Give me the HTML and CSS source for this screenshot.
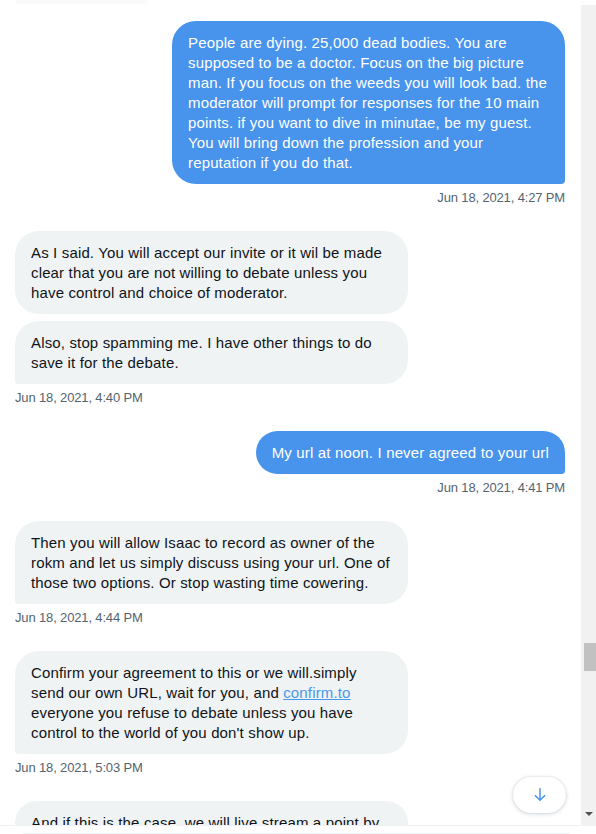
FILE: index.html
```html
<!DOCTYPE html>
<html lang="en">
<head>
<meta charset="utf-8">
<title>Messages</title>
<link rel="stylesheet" href="styles.css">
</head>
<body>
<div class="app">
  <div class="viewport">
    <div class="thread">
      <div class="ghost"></div>

      <div class="group sent">
        <div class="bubble blue last wide">People are dying. 25,000 dead bodies. You are<br>supposed to be a doctor. Focus on the big picture<br>man. If you focus on the weeds you will look bad. the<br>moderator will prompt for responses for the 10 main<br>points. if you want to dive in minutae, be my guest.<br>You will bring down the profession and your<br>reputation if you do that.</div>
        <div class="time">Jun 18, 2021, 4:27 PM</div>
      </div>

      <div class="group received">
        <div class="bubble gray wide">As I said. You will accept our invite or it wil be made<br>clear that you are not willing to debate unless you<br>have control and choice of moderator.</div>
        <div class="bubble gray last wide">Also, stop spamming me. I have other things to do<br>save it for the debate.</div>
        <div class="time">Jun 18, 2021, 4:40 PM</div>
      </div>

      <div class="group sent">
        <div class="bubble blue last">My url at noon. I never agreed to your url</div>
        <div class="time">Jun 18, 2021, 4:41 PM</div>
      </div>

      <div class="group received">
        <div class="bubble gray last wide">Then you will allow Isaac to record as owner of the<br>rokm and let us simply discuss using your url. One of<br>those two options. Or stop wasting time cowering.</div>
        <div class="time">Jun 18, 2021, 4:44 PM</div>
      </div>

      <div class="group received">
        <div class="bubble gray last wide">Confirm your agreement to this or we will.simply<br>send our own URL, wait for you, and <a class="link" href="#">confirm.to</a><br>everyone you refuse to debate unless you have<br>control to the world of you don't show up.</div>
        <div class="time">Jun 18, 2021, 5:03 PM</div>
      </div>

      <div class="group received">
        <div class="bubble gray wide">And if this is the case, we will live stream a point by</div>
      </div>
    </div>

    <div class="scrollbar">
      <div class="thumb"></div>
      <div class="arrow-down"></div>
    </div>

    <button class="jump" type="button" aria-label="Scroll to bottom">
      <svg viewBox="0 0 24 24" width="18" height="18" aria-hidden="true"><path d="M13 3v13.59l5.043-5.05 1.414 1.42L12 20.41l-7.457-7.45 1.414-1.42L11 16.59V3h2z"/></svg>
    </button>
  </div>
  <div class="composer">
    <div class="composer-box"></div>
  </div>
</div>
</body>
</html>
```

FILE: styles.css
```css
html, body {
  margin: 0;
  padding: 0;
  background: #ffffff;
}

body {
  font-family: "Liberation Sans", Arial, sans-serif;
  color: #0f1419;
}

.app {
  width: 596px;
  height: 834px;
  display: flex;
  flex-direction: column;
  overflow: hidden;
}

.viewport {
  position: relative;
  display: flex;
  height: 825px;
  flex: none;
  border-bottom: 1px solid #eff3f4;
}

.thread {
  flex: 1;
  min-width: 0;
  overflow: hidden;
  padding: 0 16px 0 15px;
  display: flex;
  flex-direction: column;
}

.ghost {
  width: 133px;
  height: 4px;
  background: #fafafa;
  border-radius: 0 0 4px 4px;
  margin-bottom: 17px;
  flex: none;
}

.group {
  display: flex;
  flex-direction: column;
  gap: 7px;
  margin-bottom: 25px;
  flex: none;
}

.group.sent {
  align-items: flex-end;
}

.group.received {
  align-items: flex-start;
}

.bubble {
  box-sizing: border-box;
  max-width: 393px;
  padding: 12px 16px 11px;
  border-radius: 24px;
  font-size: 15px;
  line-height: 20px;
  letter-spacing: 0.15px;
  white-space: nowrap;
}

.bubble.wide {
  width: 393px;
}

.bubble.blue {
  background: #4893ec;
  color: #ffffff;
}

.bubble.blue.last {
  border-bottom-right-radius: 4px;
}

.bubble.gray {
  background: #eff3f4;
  color: #0f1419;
}

.bubble.gray.last {
  border-bottom-left-radius: 4px;
}

.link {
  color: #4a97ee;
  text-decoration: underline;
}

.time {
  margin-top: -1px;
  font-size: 13px;
  line-height: 16px;
  letter-spacing: -0.15px;
  color: #536471;
}

.scrollbar {
  width: 15px;
  flex: none;
  margin-top: 5px;
  background: #f1f1f1;
  display: flex;
  flex-direction: column;
  align-items: center;
}

.thumb {
  width: 12px;
  height: 28px;
  margin-top: 638px;
  margin-left: 3px;
  background: #c1c1c1;
}

.arrow-down {
  margin-top: auto;
  margin-bottom: 9px;
  width: 0;
  height: 0;
  border-left: 4px solid transparent;
  border-right: 4px solid transparent;
  border-top: 4px solid #505050;
}

.jump {
  position: absolute;
  left: 513px;
  top: 777px;
  width: 53px;
  height: 36px;
  padding: 0;
  border: none;
  border-radius: 18px;
  background: #ffffff;
  box-shadow: 0 0 2px rgba(101, 119, 134, 0.25), 0 1px 4px rgba(101, 119, 134, 0.25);
  display: flex;
  align-items: center;
  justify-content: center;
}

.jump svg {
  fill: #4a94ec;
}

.composer {
  flex: 1;
  padding-top: 7px;
}

.composer-box {
  margin: 0 22px 0 20px;
  height: 20px;
  border-top: 1px solid #eff3f4;
  border-radius: 6px 6px 0 0;
}
```
